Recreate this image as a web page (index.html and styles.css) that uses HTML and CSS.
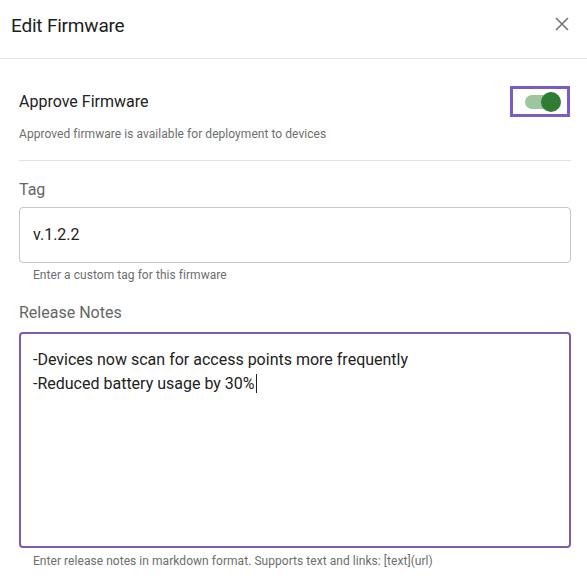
FILE: index.html
```html
<!DOCTYPE html>
<html>
<head>
<meta charset="utf-8">
<link rel="stylesheet" href="styles.css">
</head>
<body>
<div class="dialog">
  <div class="header">
    <h1 class="title">Edit Firmware</h1>
    <button class="close" aria-label="Close">
      <svg width="14" height="14" viewBox="0 0 14 14"><path d="M1 1L13 13M13 1L1 13" stroke="#757575" stroke-width="1.6" fill="none"/></svg>
    </button>
  </div>
  <div class="content">
    <div class="switch-row">
      <span class="switch-label">Approve Firmware</span>
      <span class="switch-focus"><span class="track"></span><span class="knob"></span></span>
    </div>
    <div class="switch-help">Approved firmware is available for deployment to devices</div>
    <hr class="divider">
    <label class="field-label">Tag</label>
    <div class="input">v.1.2.2</div>
    <div class="helper">Enter a custom tag for this firmware</div>
    <label class="field-label notes-label">Release Notes</label>
    <div class="textarea">-Devices now scan for access points more frequently<br>-Reduced battery usage by 30%<span class="caret"></span></div>
    <div class="helper">Enter release notes in markdown format. Supports text and links: [text](url)</div>
  </div>
</div>
</body>
</html>
```
FILE: styles.css
```css
html, body { margin: 0; padding: 0; background: #fff; }
body { font-family: Roboto, "Noto Sans", sans-serif; color: #222; }
.dialog { width: 587px; }
.header {
  box-sizing: border-box;
  height: 59px;
  border-bottom: 1px solid #e3e3e3;
  display: flex;
  justify-content: space-between;
  align-items: flex-start;
  padding: 14px 18px 0 11px;
}
.title { margin: 0; font-size: 19px; font-weight: 400; line-height: 24px; color: #1e1e1e; letter-spacing: -0.2px; }
.close { border: 0; background: none; padding: 0; margin-top: 3px; width: 14px; height: 14px; display: block; }
.close svg { display: block; }
.content { padding: 26px 16px 0 19px; }
.switch-row { display: flex; justify-content: space-between; align-items: center; height: 32px; }
.switch-label { font-size: 16px; line-height: 24px; color: #222; padding-top: 2px; }
.switch-focus {
  position: relative;
  box-sizing: border-box;
  width: 60px; height: 31px;
  border: 3px solid #7b5cc7;
  margin-right: 1px;
  display: block;
}
.track {
  position: absolute; left: 12px; top: 6px;
  width: 30px; height: 14px; border-radius: 7px;
  background: #9cc69d;
}
.knob {
  position: absolute; left: 28px; top: 3px;
  width: 20px; height: 20px; border-radius: 50%;
  background: #2e7d32;
}
.switch-help { margin-top: 9px; font-size: 12px; line-height: 16px; color: #6e6e6e; letter-spacing: 0.05px; }
.divider { margin: 18px 0 0 0; border: 0; height: 1px; background: #e3e3e3; }
.field-label { display: block; margin-top: 17px; font-size: 16px; line-height: 24px; color: #666; }
.notes-label { margin-top: 18px; }
.input {
  box-sizing: border-box;
  margin-top: 5px;
  height: 56px;
  border: 1px solid #c6c6c6;
  border-radius: 4px;
  padding: 15px 13px;
  font-size: 16px; line-height: 24px; color: #222;
}
.helper { margin-top: 4px; padding-left: 14px; font-size: 12px; line-height: 16px; color: #6e6e6e; letter-spacing: 0.05px; }
.textarea {
  box-sizing: border-box;
  margin-top: 7px;
  height: 216px;
  border: 2px solid #7b5cb0;
  border-radius: 4px;
  padding: 14px 12px 12px;
  font-size: 16px; line-height: 24px; color: #222;
}
.textarea + .helper { margin-top: 5px; }
.caret { display: inline-block; width: 1px; height: 19px; background: #222; vertical-align: -4px; margin-left: 1px; }
```
